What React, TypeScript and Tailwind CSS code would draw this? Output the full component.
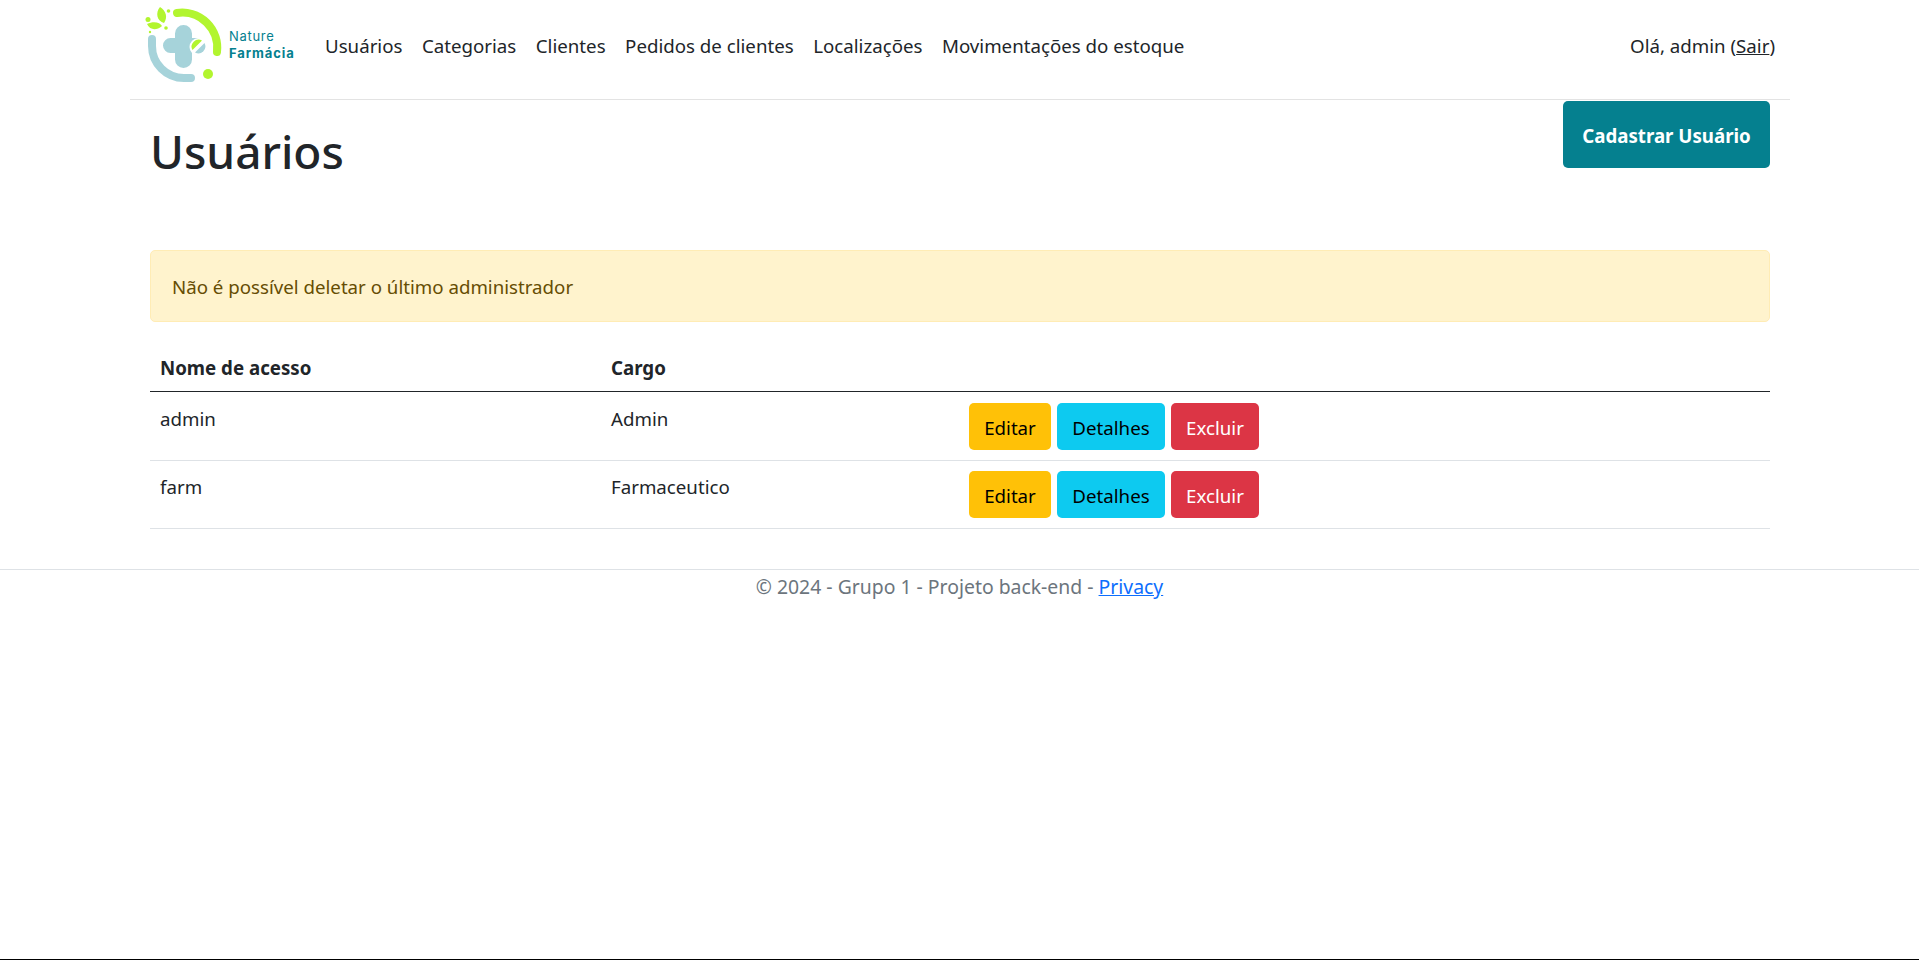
const navLinks = ["Usuários", "Categorias", "Clientes", "Pedidos de clientes", "Localizações", "Movimentações do estoque"];

const users = [
	{ login: "admin", role: "Admin" },
	{ login: "farm", role: "Farmaceutico" },
];

const Logo = () => (
	<svg viewBox="0 0 170 100" className="w-[170px] h-[100px] shrink-0">
		<path d="M47 13 A35 35 0 0 1 87 52" fill="none" stroke="#b2f52f" strokeWidth="8" strokeLinecap="round" />
		<path d="M22 39 V46 A32 32 0 0 0 54 78 H61" fill="none" stroke="#a6d3da" strokeWidth="8" strokeLinecap="round" />
		<circle cx="78" cy="74" r="5" fill="#b2f52f" />
		<path d="M45 33.5 a8.5 8.5 0 0 1 17 0 V38 h4 a7.5 7.5 0 0 1 0 15 h-4 v6.5 a8.5 8.5 0 0 1 -17 0 V53 h-4.5 a7.5 7.5 0 0 1 0 -15 H45 z" fill="#a6d3da" />
		<circle cx="68.5" cy="47" r="9" fill="#ffffff" />
		<path d="M62.5 50 a7 7 0 0 1 9.5 -9.5 z" fill="#b2f52f" />
		<path d="M65 52.5 a7 7 0 0 0 9.5 -9.5 z" fill="#a6d3da" />
		<path d="M30 7 C36 11 38 17 34 23 C27 21 25 13 30 7 Z" fill="#b2f52f" />
		<path d="M17 24 C23 21 30 22 32 26 C26 31 20 30 17 24 Z" fill="#b2f52f" />
		<circle cx="18" cy="19.5" r="2.5" fill="#b2f52f" />
		<circle cx="38.5" cy="11" r="1.8" fill="#b2f52f" />
		<circle cx="36" cy="28" r="1.8" fill="#b2f52f" />
		<circle cx="20" cy="32" r="1.2" fill="#b2f52f" />
		<text x="99" y="41" fontFamily="Inter, sans-serif" fontSize="13" letterSpacing="0.7" fill="#05808f">Nature</text>
		<text x="99" y="58" fontFamily="Inter, sans-serif" fontSize="13" letterSpacing="0.9" fontWeight="700" fill="#05808f">Farmácia</text>
	</svg>
);

const ActionButton = ({ label, className }: { label: string; className: string }) => (
	<button className={`h-[47px] pt-[3px] rounded-[5px] ${className}`}>{label}</button>
);

export default function App() {
	return (
		<div className="relative h-[960px] bg-white text-[#212529] text-[18.7px] overflow-hidden font-['Noto_Sans',sans-serif]">
			<header className="ml-[130px] w-[1660px] h-[100px] border-b border-[#e3e3e3] pr-[15px] flex items-center">
				<Logo />
				<nav className="flex gap-[19.5px] ml-[25px] mb-[6px]">
					{navLinks.map((l) => (
						<a key={l}>{l}</a>
					))}
				</nav>
				<div className="ml-auto mb-[6px]">
					Olá, admin (<a className="underline">Sair</a>)
				</div>
			</header>

			<main className="ml-[150px] w-[1620px]">
				<div className="flex justify-between items-start h-[150px]">
					<h1 className="text-[46px] font-medium leading-[1.2] mt-[24px]">Usuários</h1>
					<button className="w-[207px] h-[67px] mt-[1px] pt-[4px] rounded-[5px] bg-[#05808f] text-white font-bold">Cadastrar Usuário</button>
				</div>

				<div className="h-[72px] flex items-center px-[21px] pt-[3px] rounded-[5px] border border-[#ffecb5] bg-[#fff3cd] text-[#664d03]">
					Não é possível deletar o último administrador
				</div>

				<table className="w-full table-fixed mt-[16px] border-separate border-spacing-0">
					<thead>
						<tr className="h-[54px]">
							<th className="w-[451px] px-[10px] pt-[7px] border-b border-[#212529] text-left font-bold">Nome de acesso</th>
							<th className="w-[358px] px-[10px] pt-[7px] border-b border-[#212529] text-left font-bold">Cargo</th>
							<th className="border-b border-[#212529]" />
						</tr>
					</thead>
					<tbody>
						{users.map((u, i) => (
							<tr key={u.login} className={i === 0 ? "h-[69px]" : "h-[68px]"}>
								<td className={`px-[10px] align-top border-b border-[#dee2e6] ${i === 0 ? "pt-[13px]" : "pt-[12px]"}`}>{u.login}</td>
								<td className={`px-[10px] align-top border-b border-[#dee2e6] ${i === 0 ? "pt-[13px]" : "pt-[12px]"}`}>{u.role}</td>
								<td className={`px-[10px] align-middle border-b border-[#dee2e6] ${i === 0 ? "pt-[1px]" : ""}`}>
									<div className="flex gap-[6px]">
										<ActionButton label="Editar" className="w-[82px] bg-[#ffc107] text-black" />
										<ActionButton label="Detalhes" className="w-[108px] bg-[#0dcaf0] text-black" />
										<ActionButton label="Excluir" className="w-[88px] bg-[#dc3545] text-white" />
									</div>
								</td>
							</tr>
						))}
					</tbody>
				</table>
			</main>

			<footer className="mt-[40px] pt-[2px] border-t border-[#dee2e6] text-center text-[#6c757d] text-[19.4px]">
				© 2024 - Grupo 1 - Projeto back-end - <a className="underline text-[#0d6efd]">Privacy</a>
			</footer>

			<div className="absolute bottom-0 inset-x-0 h-px bg-black" />
		</div>
	);
}
